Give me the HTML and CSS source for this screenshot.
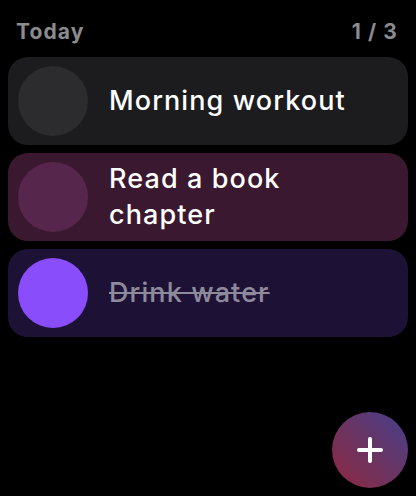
FILE: index.html
```html
<!DOCTYPE html>
<html>
<head>
<meta charset="utf-8">
<link rel="stylesheet" href="styles.css">
</head>
<body>
<div class="screen">
  <div class="header">
    <span class="title">Today</span>
    <span class="count">1 / 3</span>
  </div>
  <div class="list">
    <div class="card card-gray">
      <div class="dot dot-gray"></div>
      <div class="label">Morning workout</div>
    </div>
    <div class="card card-plum">
      <div class="dot dot-plum"></div>
      <div class="label">Read a book chapter</div>
    </div>
    <div class="card card-indigo">
      <div class="dot dot-violet"></div>
      <div class="label done">Drink water</div>
    </div>
  </div>
  <button class="fab" aria-label="Add">
    <svg width="28" height="28" viewBox="0 0 28 28"><path d="M14 3v22M3 14h22" stroke="#fff" stroke-width="4" stroke-linecap="round" fill="none"/></svg>
  </button>
</div>
</body>
</html>
```
FILE: styles.css
```css
* { box-sizing: border-box; }
html, body { margin: 0; padding: 0; background: #000; }
body { font-family: Inter, "Noto Sans", sans-serif; color: #fff; }
.screen { position: relative; width: 416px; height: 496px; overflow: hidden; padding: 0 8px; }
.header { display: flex; justify-content: space-between; align-items: flex-start; padding: 18px 10px 0 8px; height: 57px; }
.title, .count { font-size: 21px; font-weight: 700; color: #8c8c90; letter-spacing: 1.1px; line-height: 28px; }
.list { display: flex; flex-direction: column; gap: 8px; }
.card { display: flex; align-items: center; height: 88px; border-radius: 20px; padding: 0 10px; gap: 21px; }
.card-gray { background: #1c1c1e; }
.card-plum { background: #3a1930; }
.card-indigo { background: #1d1236; }
.dot { width: 70px; height: 70px; border-radius: 50%; flex: none; }
.dot-gray { background: #2c2c2e; }
.dot-plum { background: #57264c; }
.dot-violet { background: #8a4dfc; }
.label { font-size: 27px; font-weight: 500; line-height: 36px; letter-spacing: 1.1px; max-width: 250px; }
.done { color: #8e8a9b; text-decoration: line-through; text-decoration-thickness: 2px; }
.fab { position: absolute; left: 332px; top: 412px; width: 76px; height: 76px; border-radius: 50%; border: none; padding: 0; display: flex; align-items: center; justify-content: center; background: linear-gradient(45deg, #8e2840 0%, #6a3462 50%, #473f8e 100%); }
```
